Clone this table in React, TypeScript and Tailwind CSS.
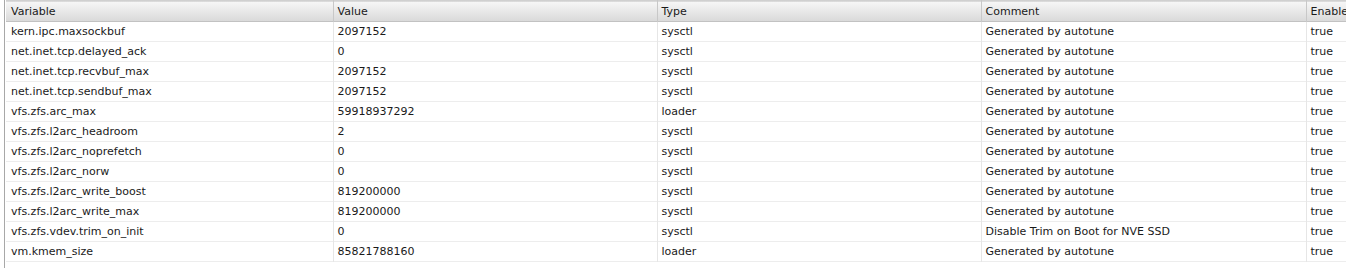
const rows: [string, string, string, string, string][] = [
  ['kern.ipc.maxsockbuf', '2097152', 'sysctl', 'Generated by autotune', 'true'],
  ['net.inet.tcp.delayed_ack', '0', 'sysctl', 'Generated by autotune', 'true'],
  ['net.inet.tcp.recvbuf_max', '2097152', 'sysctl', 'Generated by autotune', 'true'],
  ['net.inet.tcp.sendbuf_max', '2097152', 'sysctl', 'Generated by autotune', 'true'],
  ['vfs.zfs.arc_max', '59918937292', 'loader', 'Generated by autotune', 'true'],
  ['vfs.zfs.l2arc_headroom', '2', 'sysctl', 'Generated by autotune', 'true'],
  ['vfs.zfs.l2arc_noprefetch', '0', 'sysctl', 'Generated by autotune', 'true'],
  ['vfs.zfs.l2arc_norw', '0', 'sysctl', 'Generated by autotune', 'true'],
  ['vfs.zfs.l2arc_write_boost', '819200000', 'sysctl', 'Generated by autotune', 'true'],
  ['vfs.zfs.l2arc_write_max', '819200000', 'sysctl', 'Generated by autotune', 'true'],
  ['vfs.zfs.vdev.trim_on_init', '0', 'sysctl', 'Disable Trim on Boot for NVE SSD', 'true'],
  ['vm.kmem_size', '85821788160', 'loader', 'Generated by autotune', 'true']
]

const columns = [
  { title: 'Variable', width: 'w-[327px]' },
  { title: 'Value', width: 'w-[324px]' },
  { title: 'Type', width: 'w-[324px]' },
  { title: 'Comment', width: 'w-[325px]' },
  { title: 'Enabled', width: 'w-[120px]' }
]

export default function App() {
  return (
    <div className="h-[268px] w-[1346px] overflow-hidden bg-white pl-[4px] font-['DejaVu_Sans',sans-serif] text-[11px] text-[#1a1a1a]">
      <div className="h-full border-l border-[#a8a8a8] pl-px">
        <table className="table-fixed border-collapse w-[1420px]">
          <thead>
            <tr className="h-[21px] bg-gradient-to-b from-[#f6f6f6] to-[#dadada] border-t border-[#d0d0d0] border-b border-b-[#c2c2c2]">
              {columns.map((col, idx) => (
                <th
                  key={col.title}
                  className={`${col.width} p-0 pl-[4px] text-left font-normal leading-[19px] whitespace-nowrap ${
                    idx > 0 ? 'border-l border-[#c8c8c8]' : 'pl-[5px]'
                  }`}>
                  {col.title}
                </th>
              ))}
            </tr>
          </thead>
          <tbody>
            {rows.map((row, idx) => (
              <tr key={idx} className="h-[20px] border-b border-[#ededed]">
                {row.map((cell, cIdx) => (
                  <td
                    key={cIdx}
                    className={`p-0 pl-[4px] leading-[19px] whitespace-nowrap ${
                      cIdx > 0 ? 'border-l border-[#e6e6e6]' : 'pl-[5px]'
                    }`}>
                    {cell}
                  </td>
                ))}
              </tr>
            ))}
          </tbody>
        </table>
      </div>
    </div>
  )
}
